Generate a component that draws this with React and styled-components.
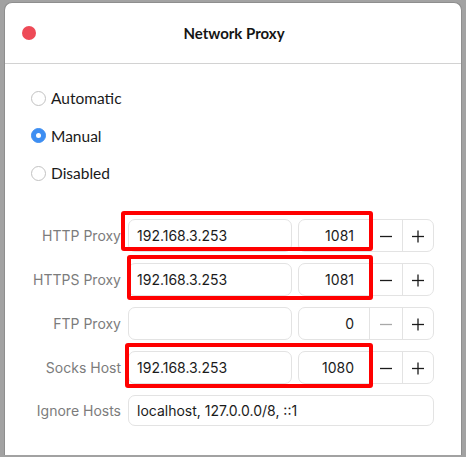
import React from "react";
import styled, { createGlobalStyle } from "styled-components";

const Global = createGlobalStyle`
  html, body { margin: 0; padding: 0; background: #a2a2a2; }
  body { width: 466px; height: 457px; overflow: hidden; font-family: Inter, "Noto Sans", sans-serif; }
  * { box-sizing: border-box; }
`;

const Window = styled.div`
  margin: 2px 0 0 4px;
  width: 458px;
  height: 453px;
  background: #ffffff;
  border: 1px solid #8e8e8e;
  border-bottom: none;
  border-radius: 8px 8px 0 0;
  display: flex;
  flex-direction: column;
`;

const Header = styled.div`
  height: 61px;
  border-bottom: 1px solid #d2d2d2;
  display: flex;
  align-items: center;
  position: relative;
  justify-content: center;
`;

const CloseDot = styled.span`
  position: absolute;
  left: 17px;
  top: 23px;
  width: 14px;
  height: 14px;
  border-radius: 50%;
  background: #ee4a57;
`;

const Title = styled.h1`
  margin: 0 0 0 2px;
  font-family: Lato, "Noto Sans", sans-serif;
  font-weight: 700;
  font-size: 15px;
  color: #151515;
`;

const Body = styled.div`
  padding: 23px 0 0 26px;
  display: flex;
  flex-direction: column;
`;

const RadioGroup = styled.div`
  display: flex;
  flex-direction: column;
  gap: 15.5px;
`;

const RadioRow = styled.label`
  height: 22px;
  display: flex;
  align-items: center;
  gap: 5px;
  font-family: Lato, "Noto Sans", sans-serif;
  font-size: 15.5px;
  color: #1a1a1a;
`;

const RadioCircle = styled.span`
  width: 15px;
  height: 15px;
  border-radius: 50%;
  border: 1px solid ${(p) => (p.$on ? "#3d8ef2" : "#c2c2c2")};
  background: ${(p) => (p.$on ? "#3d8ef2" : "#ffffff")};
  display: flex;
  align-items: center;
  justify-content: center;
  &::after {
    content: "";
    width: 5px;
    height: 5px;
    border-radius: 50%;
    background: #ffffff;
    display: ${(p) => (p.$on ? "block" : "none")};
  }
`;

const Form = styled.div`
  margin-top: 35px;
  display: flex;
  flex-direction: column;
  gap: 11px;
`;

const Row = styled.div`
  position: relative;
  display: grid;
  grid-template-columns: 90px 164px 135px;
  column-gap: 7px;
  height: ${(p) => p.$h || 33}px;
  & > :nth-child(3) { margin-left: -1px; }
`;

const Label = styled.span`
  justify-self: end;
  align-self: center;
  font-size: 14px;
  color: #7c7c7c;
  white-space: nowrap;
`;

const Entry = styled.div`
  grid-column: ${(p) => (p.$wide ? "2 / 4" : "auto")};
  border: 1px solid #e3e3e3;
  border-radius: 7px;
  display: flex;
  align-items: center;
  padding: 0 8px;
  font-size: 14px;
  color: #1b1b1b;
  white-space: nowrap;
`;

const Spin = styled.div`
  border: 1px solid #e3e3e3;
  border-radius: 7px;
  display: grid;
  grid-template-columns: 71px 32px 1fr;
`;

const SpinValue = styled.div`
  border-right: 1px solid #e3e3e3;
  display: flex;
  align-items: center;
  justify-content: flex-end;
  padding-right: 15px;
  font-size: 14px;
  color: #1b1b1b;
`;

const SpinButton = styled.div`
  display: flex;
  align-items: center;
  justify-content: center;
  color: ${(p) => (p.$disabled ? "#a8a8a8" : "#1b1b1b")};
  & + & { border-left: 1px solid #e3e3e3; }
`;

const Highlight = styled.span`
  position: absolute;
  left: ${(p) => p.$x}px;
  top: -8px;
  width: ${(p) => p.$w}px;
  height: ${(p) => p.$h}px;
  border: 4px solid #ff0000;
  border-radius: 3px;
  pointer-events: none;
`;

const Minus = () => (
  <svg width="14" height="14" viewBox="0 0 14 14">
    <line x1="1" y1="7.5" x2="13" y2="7.5" stroke="currentColor" strokeWidth="1.3" />
  </svg>
);
const Plus = () => (
  <svg width="14" height="14" viewBox="0 0 14 14">
    <line x1="1" y1="7.5" x2="13" y2="7.5" stroke="currentColor" strokeWidth="1.3" />
    <line x1="7" y1="1.5" x2="7" y2="13.5" stroke="currentColor" strokeWidth="1.3" />
  </svg>
);

const proxies = [
  { label: "HTTP Proxy", host: "192.168.3.253", port: "1081", hl: { x: 90, w: 252, h: 40 } },
  { label: "HTTPS Proxy", host: "192.168.3.253", port: "1081", hl: { x: 96, w: 246, h: 45 } },
  { label: "FTP Proxy", host: "", port: "0" },
  { label: "Socks Host", host: "192.168.3.253", port: "1080", hl: { x: 94, w: 248, h: 45 } },
];

export default function App() {
  return (
    <>
      <Global />
      <Window>
        <Header>
          <CloseDot />
          <Title>Network Proxy</Title>
        </Header>
        <Body>
          <RadioGroup>
            <RadioRow><RadioCircle />Automatic</RadioRow>
            <RadioRow><RadioCircle $on />Manual</RadioRow>
            <RadioRow><RadioCircle />Disabled</RadioRow>
          </RadioGroup>
          <Form>
            {proxies.map((p) => (
              <Row key={p.label}>
                <Label>{p.label}</Label>
                <Entry>{p.host}</Entry>
                <Spin>
                  <SpinValue>{p.port}</SpinValue>
                  <SpinButton $disabled={p.port === "0"}><Minus /></SpinButton>
                  <SpinButton><Plus /></SpinButton>
                </Spin>
                {p.hl && <Highlight $x={p.hl.x} $w={p.hl.w} $h={p.hl.h} />}
              </Row>
            ))}
            <Row $h={31}>
              <Label>Ignore Hosts</Label>
              <Entry $wide>localhost, 127.0.0.0/8, ::1</Entry>
            </Row>
          </Form>
        </Body>
      </Window>
    </>
  );
}
